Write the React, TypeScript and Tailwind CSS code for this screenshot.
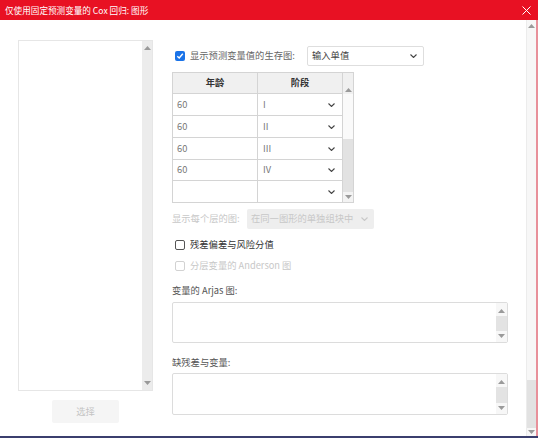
import React from "react";

const font = { fontFamily: '"Noto Sans CJK SC", "Noto Sans", sans-serif' };

function Up({ className = "" }: { className?: string }) {
  return (
    <svg width="7" height="4" viewBox="0 0 7 4" className={className}>
      <path d="M0 4 L3.5 0 L7 4 Z" fill="#9a9a9a" />
    </svg>
  );
}

function Down({ className = "" }: { className?: string }) {
  return (
    <svg width="7" height="4" viewBox="0 0 7 4" className={className}>
      <path d="M0 0 L3.5 4 L7 0 Z" fill="#9a9a9a" />
    </svg>
  );
}

function Chevron({ color = "#555" }: { color?: string }) {
  return (
    <svg width="7" height="4" viewBox="0 0 7 4">
      <path d="M0.5 0.5 L3.5 3.5 L6.5 0.5" fill="none" stroke={color} strokeWidth="1.1" />
    </svg>
  );
}

function Check({ checked, disabled }: { checked?: boolean; disabled?: boolean }) {
  if (checked) {
    return (
      <span className="w-[10px] h-[10px] rounded-[2px] bg-[#1a73e8] flex items-center justify-center shrink-0">
        <svg width="8" height="8" viewBox="0 0 8 8">
          <path d="M1.3 4.2 L3.2 6 L6.8 1.8" fill="none" stroke="#fff" strokeWidth="1.4" />
        </svg>
      </span>
    );
  }
  return (
    <span
      className={
        "block w-[10px] h-[10px] rounded-[2px] border bg-white shrink-0 " +
        (disabled ? "border-[#d2d2d2]" : "border-[#555]")
      }
    />
  );
}

function StageCell({ value }: { value: string }) {
  return (
    <div className="flex-1 flex items-center justify-between pl-[5px] pr-[7px] text-[#777]">
      <span>{value}</span>
      <Chevron color="#444" />
    </div>
  );
}

const rows = [
  { age: "60", stage: "I", h: "h-[22px]" },
  { age: "60", stage: "II", h: "h-[22px]" },
  { age: "60", stage: "III", h: "h-[22px]" },
  { age: "60", stage: "IV", h: "h-[21px]" },
  { age: "", stage: "", h: "h-[21px]" },
];

function TextBox({ h }: { h: string }) {
  return (
    <div className={"flex border border-[#dcdcdc] rounded-[2px] bg-white " + h}>
      <div className="flex-1" />
      <div className="w-[11px] flex flex-col items-center bg-[#f7f7f7]">
        <div className="h-[10px] flex items-end justify-center">
          <Up />
        </div>
        <div className="flex-1 w-full mt-[3px] mb-[3px] bg-[#e3e3e3]" />
        <div className="h-[8px] flex items-start justify-center">
          <Down />
        </div>
      </div>
    </div>
  );
}

export default function App() {
  return (
    <div className="w-[538px] h-[438px] flex flex-col overflow-hidden bg-white text-[9.3px] text-[#555]" style={font}>
      {/* Title bar */}
      <div className="h-[20px] bg-[#e81123] flex items-center justify-between pl-[5px] pr-[7px] text-white shrink-0">
        <span className="text-[8.6px] leading-none">仅使用固定预测变量的 Cox 回归: 图形</span>
        <svg width="9" height="9" viewBox="0 0 9 9">
          <path d="M0.5 0.5 L8.5 8.5 M8.5 0.5 L0.5 8.5" stroke="#fff" strokeWidth="1" />
        </svg>
      </div>

      <div className="flex flex-1 min-h-0">
        {/* Content */}
        <div className="flex-1 flex pl-[18px]">
          {/* Left list + button */}
          <div className="w-[135px] flex flex-col items-center pt-[20px]">
            <div className="w-full h-[351px] flex border border-[#e6e6e6] bg-white">
              <div className="flex-1" />
              <div className="w-[10px] bg-[#ececec] flex flex-col items-center justify-between py-[5px]">
                <Up />
                <Down />
              </div>
            </div>
            <div className="mt-[9px] w-[67px] h-[23px] bg-[#f5f5f5] rounded-[2px] flex items-center justify-center text-[#c4c4c4]">
              选择
            </div>
          </div>

          {/* Right column */}
          <div className="w-[336px] ml-[19px] flex flex-col pt-[26px]">
            <div className="h-[20px] flex items-center">
              <div className="w-[135px] flex items-center">
                <span className="ml-[3px]">
                  <Check checked />
                </span>
                <span className="ml-[5px] text-[#666]">显示预测变量值的生存图:</span>
              </div>
              <div className="w-[117px] h-[20px] border border-[#dedede] rounded-[2px] flex items-center justify-between pl-[4px] pr-[6px] text-[#444]">
                <span>输入单值</span>
                <Chevron color="#444" />
              </div>
            </div>

            {/* Table */}
            <div className="mt-[6px] w-[182px] border border-[#d4d4d4] flex">
              <div className="flex-1 flex flex-col">
                <div className="h-[21px] flex bg-[#f0f0f0] font-bold text-[#333] border-b border-[#d4d4d4]">
                  <div className="w-[85px] flex items-center justify-center border-r border-[#d4d4d4]">年龄</div>
                  <div className="flex-1 flex items-center justify-center">阶段</div>
                </div>
                {rows.map((r, i) => (
                  <div key={i} className={"flex border-b border-[#d4d4d4] last:border-b-0 " + r.h}>
                    <div className="w-[85px] flex items-center pl-[4px] text-[#777] border-r border-[#d4d4d4]">{r.age}</div>
                    <StageCell value={r.stage} />
                  </div>
                ))}
              </div>
              <div className="w-[11px] flex flex-col border-l border-[#d4d4d4] bg-[#f3f3f3]">
                <div className="h-[21px] bg-[#f0f0f0] flex items-end justify-center pb-[2px]">
                  <Up />
                </div>
                <div className="h-[45px] bg-[#fafafa]" />
                <div className="flex-1 bg-[#e2e2e2]" />
                <div className="h-[10px] flex items-center justify-center bg-[#f3f3f3]">
                  <Down />
                </div>
              </div>
            </div>

            {/* Disabled select row */}
            <div className="mt-[6px] h-[20px] flex items-center text-[#c8c8c8]">
              <span className="w-[75px]">显示每个层的图:</span>
              <div className="w-[127px] h-[20px] bg-[#eeeeee] rounded-[2px] flex items-center justify-between pl-[4px] pr-[6px]">
                <span>在同一图形的单独组块中</span>
                <Chevron color="#c8c8c8" />
              </div>
            </div>

            <div className="mt-[8px] h-[16px] flex items-center">
              <span className="ml-[3px]">
                <Check />
              </span>
              <span className="ml-[5px] text-[#333]">残差偏差与风险分值</span>
            </div>
            <div className="mt-[5px] h-[16px] flex items-center text-[#c8c8c8]">
              <span className="ml-[3px]">
                <Check disabled />
              </span>
              <span className="ml-[5px]">分层变量的 Anderson 图</span>
            </div>

            <div className="mt-[10px] h-[14px] flex items-center">变量的 Arjas 图:</div>
            <div className="mt-[4px]">
              <TextBox h="h-[41px]" />
            </div>

            <div className="mt-[13px] h-[14px] flex items-center">缺残差与变量:</div>
            <div className="mt-[3px]">
              <TextBox h="h-[42px]" />
            </div>
          </div>
        </div>

        {/* Window scrollbar */}
        <div className="w-[10px] flex flex-col items-center bg-[#f7f7f7] border-l border-[#ececec]">
          <div className="h-[12px] flex items-center justify-center">
            <Up />
          </div>
          <div className="flex-1" />
          <div className="h-[48px] w-full bg-[#e2e2e2]" />
          <div className="h-[8px] flex items-center justify-center">
            <Down />
          </div>
        </div>
        <div className="w-[2px] bg-[#e8909a]" />
      </div>
      <div className="h-[2px] bg-[#3b3f6e] shrink-0" />
    </div>
  );
}
